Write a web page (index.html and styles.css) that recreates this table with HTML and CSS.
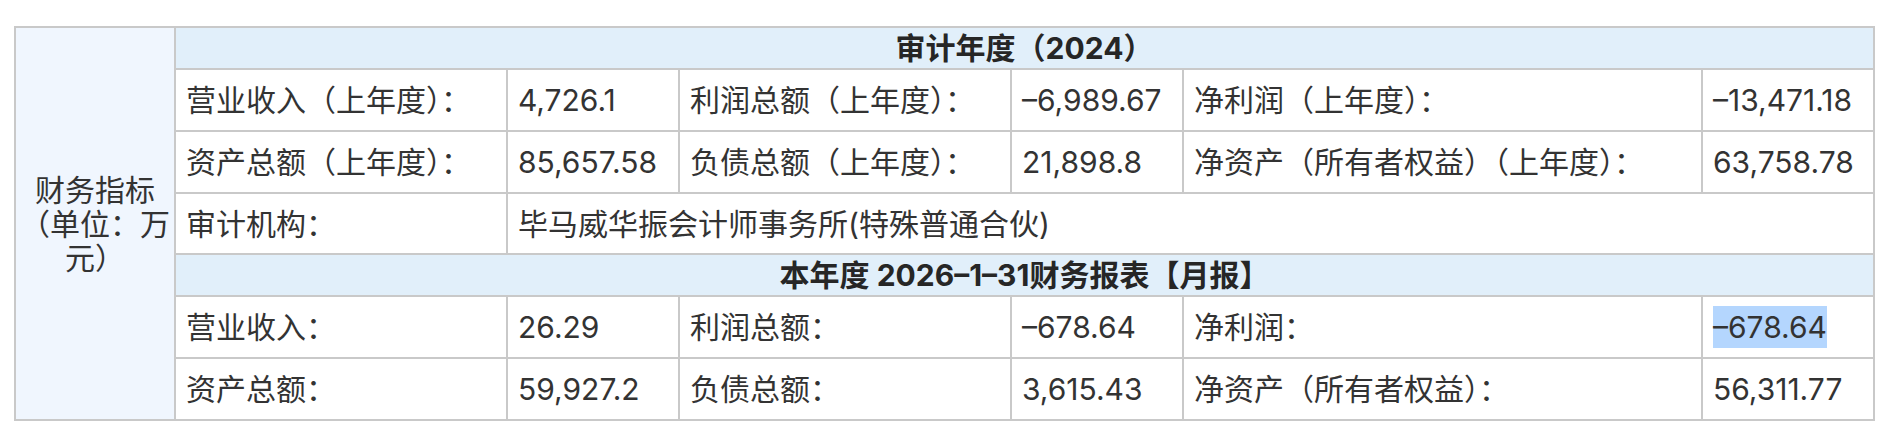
FILE: index.html
```html
<!DOCTYPE html>
<html lang="zh-CN">
<head>
<meta charset="utf-8">
<title>财务指标</title>
<link rel="stylesheet" href="styles.css">
</head>
<body>
<div class="wrap">
<table class="fin">
  <colgroup>
    <col class="c-side">
    <col class="c-label">
    <col class="c-val">
    <col class="c-label">
    <col class="c-val">
    <col class="c-label-wide">
    <col class="c-val">
  </colgroup>
  <tbody>
    <tr class="r-head">
      <th class="side" rowspan="7">财务指标（单位：万元）</th>
      <th class="head" colspan="6">审计年度（2024）</th>
    </tr>
    <tr class="r-data">
      <td>营业收入（上年度）：</td>
      <td>4,726.1</td>
      <td>利润总额（上年度）：</td>
      <td>–6,989.67</td>
      <td>净利润（上年度）：</td>
      <td>–13,471.18</td>
    </tr>
    <tr class="r-data">
      <td>资产总额（上年度）：</td>
      <td>85,657.58</td>
      <td>负债总额（上年度）：</td>
      <td>21,898.8</td>
      <td>净资产（所有者权益）（上年度）：</td>
      <td>63,758.78</td>
    </tr>
    <tr class="r-data r-short">
      <td>审计机构：</td>
      <td colspan="5">毕马威华振会计师事务所(特殊普通合伙)</td>
    </tr>
    <tr class="r-head">
      <th class="head" colspan="6">本年度 2026–1–31财务报表【月报】</th>
    </tr>
    <tr class="r-data">
      <td>营业收入：</td>
      <td>26.29</td>
      <td>利润总额：</td>
      <td>–678.64</td>
      <td>净利润：</td>
      <td><span class="sel">–678.64</span></td>
    </tr>
    <tr class="r-data">
      <td>资产总额：</td>
      <td>59,927.2</td>
      <td>负债总额：</td>
      <td>3,615.43</td>
      <td>净资产（所有者权益）：</td>
      <td>56,311.77</td>
    </tr>
  </tbody>
</table>
</div>
</body>
</html>
```
FILE: styles.css
```css
html, body {
  margin: 0;
  padding: 0;
  background: #ffffff;
}

.wrap {
  padding: 26px 0 0 14px;
}

.fin {
  border-collapse: collapse;
  table-layout: fixed;
  width: 1860px;
  font-family: "Inter", "Noto Sans CJK SC", sans-serif;
  font-size: 30px;
  color: #333333;
}

.c-side { width: 160px; }
.c-label { width: 332px; }
.c-val { width: 172px; }
.c-label-wide { width: 519px; }

.fin th,
.fin td {
  border: 2px solid #c9c9c9;
  padding: 0 10px;
  line-height: 40px;
  text-align: left;
  vertical-align: middle;
  white-space: nowrap;
  overflow: hidden;
}

.fin .side {
  background: #f0f6fe;
  font-weight: normal;
  text-align: center;
  white-space: normal;
  padding: 0 4px;
  line-height: 34px;
}

.fin .head {
  background: #e1effa;
  font-weight: bold;
  text-align: center;
  color: #262626;
}

.r-head > .head {
  height: 40px;
}

.r-data > td {
  height: 60px;
}

.r-short > td {
  height: 59px;
}

.sel {
  background: #b4d6fe;
  display: inline-block;
  line-height: 42px;
}
```
